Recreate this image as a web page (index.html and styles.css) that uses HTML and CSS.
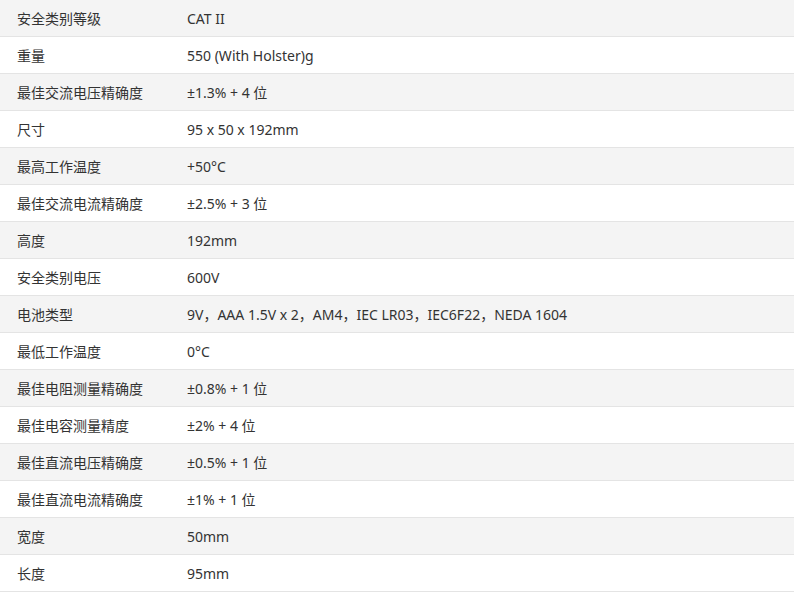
FILE: index.html
```html
<!DOCTYPE html>
<html lang="zh">
<head>
<meta charset="utf-8">
<link rel="stylesheet" href="styles.css">
</head>
<body>
<div class="specs">
<div class="row"><div class="k">安全类别等级</div><div class="v">CAT II</div></div>
<div class="row"><div class="k">重量</div><div class="v">550 (With Holster)g</div></div>
<div class="row"><div class="k">最佳交流电压精确度</div><div class="v">±1.3% + 4 位</div></div>
<div class="row"><div class="k">尺寸</div><div class="v">95 x 50 x 192mm</div></div>
<div class="row"><div class="k">最高工作温度</div><div class="v">+50°C</div></div>
<div class="row"><div class="k">最佳交流电流精确度</div><div class="v">±2.5% + 3 位</div></div>
<div class="row"><div class="k">高度</div><div class="v">192mm</div></div>
<div class="row"><div class="k">安全类别电压</div><div class="v">600V</div></div>
<div class="row"><div class="k">电池类型</div><div class="v">9V，AAA 1.5V x 2，AM4，IEC LR03，IEC6F22，NEDA 1604</div></div>
<div class="row"><div class="k">最低工作温度</div><div class="v">0°C</div></div>
<div class="row"><div class="k">最佳电阻测量精确度</div><div class="v">±0.8% + 1 位</div></div>
<div class="row"><div class="k">最佳电容测量精度</div><div class="v">±2% + 4 位</div></div>
<div class="row"><div class="k">最佳直流电压精确度</div><div class="v">±0.5% + 1 位</div></div>
<div class="row"><div class="k">最佳直流电流精确度</div><div class="v">±1% + 1 位</div></div>
<div class="row"><div class="k">宽度</div><div class="v">50mm</div></div>
<div class="row"><div class="k">长度</div><div class="v">95mm</div></div>
</div>
</body>
</html>
```
FILE: styles.css
```css
html, body {
  margin: 0;
  padding: 0;
  background: #fff;
}
body {
  font-family: "Noto Sans", "Noto Sans CJK SC", sans-serif;
  font-size: 14px;
  color: #333;
}
.specs {
  display: flex;
  flex-direction: column;
}
.row {
  display: flex;
  align-items: center;
  height: 36px;
  border-bottom: 1px solid #e4e4e4;
  white-space: nowrap;
}
.row:nth-child(odd) {
  background: #f4f4f4;
}
.k {
  width: 187px;
  padding-left: 17px;
  box-sizing: border-box;
  flex: none;
}
.v {
  flex: 1;
}
```
